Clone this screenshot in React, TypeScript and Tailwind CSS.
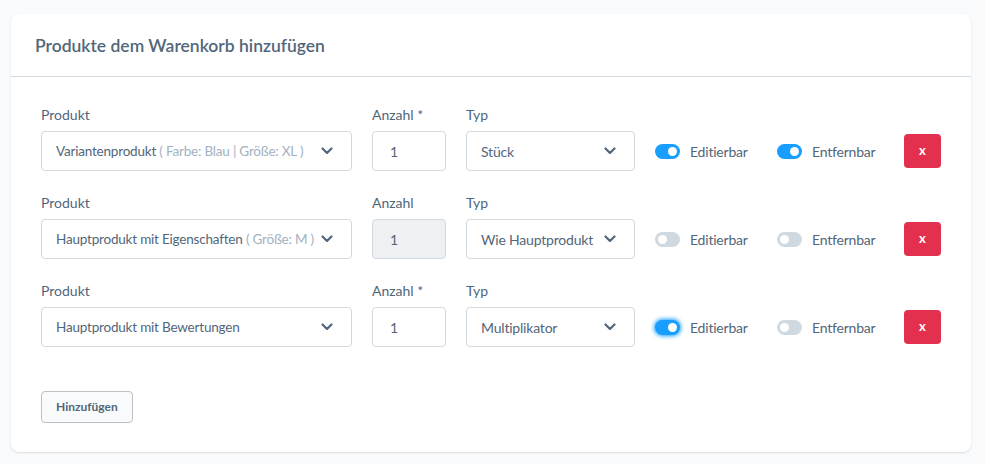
import * as React from 'react';

type Row = {
    product: string;
    hint?: string;
    qty: string;
    qtyRequired: boolean;
    type: string;
    editable: boolean;
    removable: boolean;
    focused?: boolean;
};

const rows: Row[] = [
    { product: 'Variantenprodukt', hint: '( Farbe: Blau | Größe: XL )', qty: '1', qtyRequired: true, type: 'Stück', editable: true, removable: true },
    { product: 'Hauptprodukt mit Eigenschaften', hint: '( Größe: M )', qty: '1', qtyRequired: false, type: 'Wie Hauptprodukt', editable: false, removable: false },
    { product: 'Hauptprodukt mit Bewertungen', qty: '1', qtyRequired: true, type: 'Multiplikator', editable: true, removable: false, focused: true },
];

function Chevron() {
    return (
        <svg width="12" height="8" viewBox="0 0 12 8" className="shrink-0">
            <path d="M1.5 1.5 L6 6 L10.5 1.5" fill="none" stroke="#52667a" strokeWidth="2.2" strokeLinecap="round" strokeLinejoin="round" />
        </svg>
    );
}

function Toggle({ on, focused }: { on: boolean; focused?: boolean }) {
    return (
        <span
            className={`relative inline-flex h-[15px] w-[25px] shrink-0 items-center rounded-full ${on ? 'bg-[#189eff]' : 'bg-[#d1d9e0]'} ${focused ? 'shadow-[0_0_4px_1px_#189eff]' : ''}`}
        >
            <span className={`absolute top-[3px] h-[9px] w-[9px] rounded-full bg-white ${on ? 'left-[13px]' : 'left-[3px]'}`} />
        </span>
    );
}

function ProductRow({ row }: { row: Row }) {
    return (
        <div className="flex items-end">
            {/* Produkt */}
            <div className="w-[311px]">
                <div className="mb-[8px] text-[14px] leading-4 text-[#52667a]">Produkt</div>
                <div className="flex h-10 items-center justify-between rounded border border-[#d1d9e0] bg-white pl-[14px] pr-[18px]">
                    <span className="whitespace-nowrap pt-[1px] text-[13.5px] tracking-[-0.2px] text-[#52667a]">
                        {row.product}
                        {row.hint && <span className="text-[#a2b1bf]"> {row.hint}</span>}
                    </span>
                    <Chevron />
                </div>
            </div>

            {/* Anzahl */}
            <div className="ml-5 w-[74px]">
                <div className="mb-[8px] text-[14px] leading-4 text-[#52667a]">
                    Anzahl{row.qtyRequired && <span className="text-[#52667a]"> *</span>}
                </div>
                <div
                    className={`flex h-10 items-center rounded border border-[#d1d9e0] pl-[17px] text-[14px] text-[#52667a] ${row.qtyRequired ? 'bg-white' : 'bg-[#eef0f4]'}`}
                >
                    {row.qty}
                </div>
            </div>

            {/* Typ */}
            <div className="ml-5 w-[169px]">
                <div className="mb-[8px] text-[14px] leading-4 text-[#52667a]">Typ</div>
                <div className="flex h-10 items-center justify-between rounded border border-[#d1d9e0] bg-white pl-[14px] pr-[18px]">
                    <span className="whitespace-nowrap text-[14px] tracking-[-0.2px] text-[#52667a]">{row.type}</span>
                    <Chevron />
                </div>
            </div>

            <div className="flex h-10 items-center">
                <div className="ml-5 flex w-[122px] items-center">
                    <Toggle on={row.editable} focused={row.focused} />
                    <span className="ml-[10px] text-[14px] tracking-[-0.2px] text-[#52667a]">Editierbar</span>
                </div>
                <div className="flex w-[127px] items-center">
                    <Toggle on={row.removable} />
                    <span className="ml-[10px] text-[14px] tracking-[-0.2px] text-[#52667a]">Entfernbar</span>
                </div>
                <button className="flex h-[34px] w-[37px] items-center justify-center rounded bg-[#e3304f] text-[13px] font-bold text-white">
                    x
                </button>
            </div>
        </div>
    );
}

export default function App() {
    return (
        <div className="min-h-[464px] bg-[#f9fafb] px-[11px] pt-[14px] pb-3" style={{ fontFamily: '"Lato", "Noto Sans", sans-serif' }}>
            <div className="w-[960px] rounded-lg bg-white shadow-[0_1px_2px_rgba(0,0,0,0.12)]">
                <div className="flex h-[63px] items-center border-b border-[#d1d9e0] px-6 pt-[2px]">
                    <h2 className="text-[17.5px] font-semibold text-[#52667a]">Produkte dem Warenkorb hinzufügen</h2>
                </div>
                <div className="px-[30px] pt-[30px] pb-[29px]">
                    <div className="flex flex-col gap-[24px]">
                        {rows.map((row, i) => (
                            <ProductRow key={i} row={row} />
                        ))}
                    </div>
                    <button className="mt-[44px] h-8 rounded border border-[#bcc1c7] bg-[#f9fafb] px-[14px] text-[12px] font-bold text-[#52667a]">
                        Hinzufügen
                    </button>
                </div>
            </div>
        </div>
    );
}
